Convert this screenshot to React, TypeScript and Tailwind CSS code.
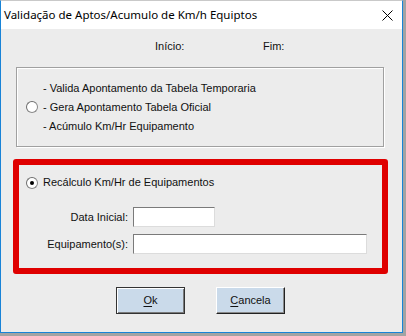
const ui = "font-['Liberation_Sans',Arial,sans-serif] text-[11px] leading-[13px] text-[#111]";

function Radio({ checked }: { checked?: boolean }) {
  return (
    <span className="relative inline-flex h-[12px] w-[12px] shrink-0 items-center justify-center rounded-full border border-[#8a8a8a] border-t-[#6e6e6e] border-l-[#6e6e6e] bg-white">
      {checked && <span className="h-[4px] w-[4px] rounded-full bg-black" />}
    </span>
  );
}

function Field({ width }: { width: string }) {
  return (
    <div
      className={`h-[20px] ${width} border border-[#dcdcdc] border-t-[#7a7a7a] border-l-[#7a7a7a] bg-white`}
    />
  );
}

export default function App() {
  return (
    <div className={`h-[336px] w-[406px] bg-[#a3a3a3] ${ui}`}>
      <div className="flex h-[333px] w-[403px] flex-col border-x border-b border-[#1883d7] border-t border-t-[#c9c9c9] bg-[#ececec]">
        {/* Title bar */}
        <div className="flex h-[28px] shrink-0 items-center justify-between bg-white pl-[3px] pr-[9px]">
          <span className="font-['Noto_Sans',sans-serif] text-[11.5px] leading-[16px] text-black">
            Validação de Aptos/Acumulo de Km/h Equiptos
          </span>
          <svg width="11" height="11" viewBox="0 0 11 11" className="mt-[1px]">
            <path d="M0.5 0.5 L10.5 10.5 M10.5 0.5 L0.5 10.5" stroke="#000" strokeWidth="1" />
          </svg>
        </div>

        {/* Início / Fim */}
        <div className="mt-[11px] flex pl-[154px]">
          <span className="w-[108px]">Início:</span>
          <span>Fim:</span>
        </div>

        {/* Opções da tabela */}
        <div className="ml-[15px] mt-[14px] flex h-[80px] w-[368px] items-center border border-[#a0a0a0] shadow-[inset_1px_1px_0_#fff,1px_1px_0_#fff]">
          <div className="ml-[9px] flex items-center">
            <Radio />
          </div>
          <div className="ml-[5px] flex flex-col leading-[19px]">
            <span>- Valida Apontamento da Tabela Temporaria</span>
            <span>- Gera Apontamento Tabela Oficial</span>
            <span>- Acúmulo Km/Hr Equipamento</span>
          </div>
        </div>

        {/* Recálculo */}
        <div className="ml-[12px] mt-[12px] flex h-[115px] w-[375px] flex-col rounded-[3px] border-[6px] border-[#df0000]">
          <div className="ml-[7px] mt-[11px] flex items-center gap-[5px]">
            <Radio checked />
            <span>Recálculo Km/Hr de Equipamentos</span>
          </div>
          <div className="mt-[18px] flex flex-col gap-[7px]">
            <div className="flex items-center">
              <span className="w-[109px] text-right">Data Inicial:</span>
              <div className="ml-[5px]">
                <Field width="w-[82px]" />
              </div>
            </div>
            <div className="flex items-center">
              <span className="w-[109px] text-right">Equipamento(s):</span>
              <div className="ml-[5px]">
                <Field width="w-[234px]" />
              </div>
            </div>
          </div>
        </div>

        {/* Botões */}
        <div className="ml-[115px] mt-[13px] flex gap-[31px]">
          <button className="flex h-[27px] w-[69px] items-center justify-center border border-[#333] bg-[#cadaea] shadow-[inset_1px_1px_0_#fff,inset_-1px_-1px_0_#7a7a7a]">
            <span>
              <span className="underline underline-offset-2">O</span>k
            </span>
          </button>
          <button className="flex h-[27px] w-[69px] items-center justify-center border border-white border-b-[#222] border-r-[#222] bg-[#cadaea] shadow-[inset_-1px_-1px_0_#8a8a8a]">
            <span>
              <span className="underline underline-offset-2">C</span>ancela
            </span>
          </button>
        </div>
      </div>
    </div>
  );
}
